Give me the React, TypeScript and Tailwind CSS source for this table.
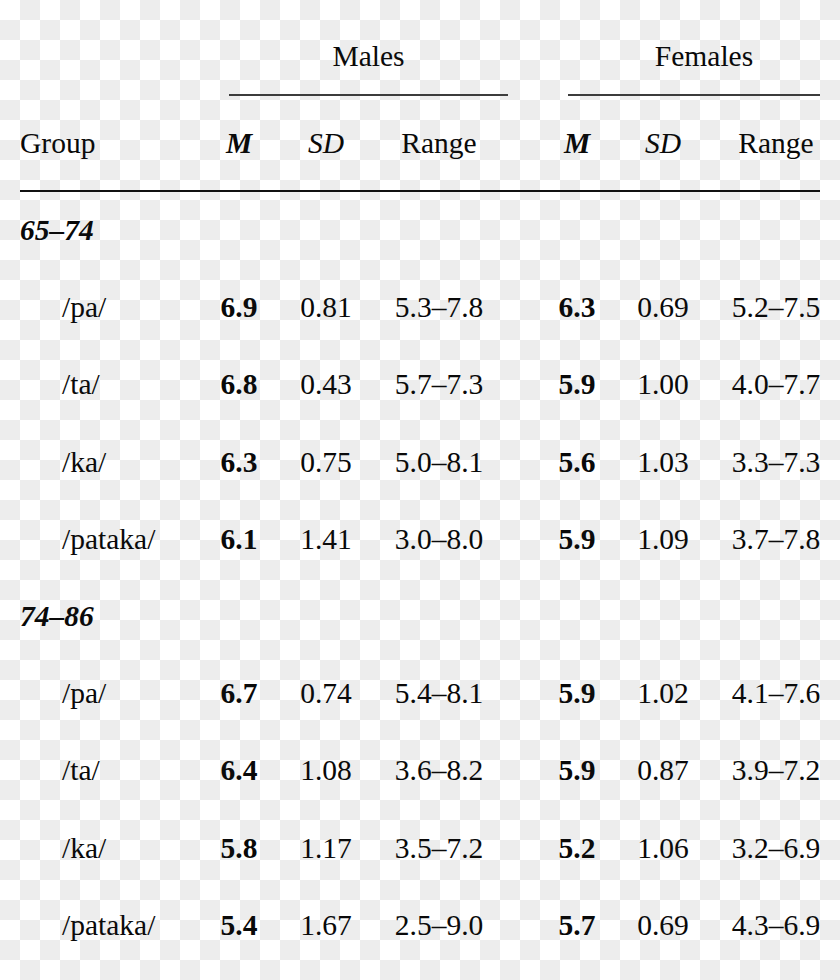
import React from "react";

type Row = [string, string, string, string, string, string, string];

const groups: { label: string; rows: Row[] }[] = [
  {
    label: "65–74",
    rows: [
      ["/pa/", "6.9", "0.81", "5.3–7.8", "6.3", "0.69", "5.2–7.5"],
      ["/ta/", "6.8", "0.43", "5.7–7.3", "5.9", "1.00", "4.0–7.7"],
      ["/ka/", "6.3", "0.75", "5.0–8.1", "5.6", "1.03", "3.3–7.3"],
      ["/pataka/", "6.1", "1.41", "3.0–8.0", "5.9", "1.09", "3.7–7.8"],
    ],
  },
  {
    label: "74–86",
    rows: [
      ["/pa/", "6.7", "0.74", "5.4–8.1", "5.9", "1.02", "4.1–7.6"],
      ["/ta/", "6.4", "1.08", "3.6–8.2", "5.9", "0.87", "3.9–7.2"],
      ["/ka/", "5.8", "1.17", "3.5–7.2", "5.2", "1.06", "3.2–6.9"],
      ["/pataka/", "5.4", "1.67", "2.5–9.0", "5.7", "0.69", "4.3–6.9"],
    ],
  },
];

const grid =
  "grid grid-cols-[200px_78px_96px_130px_36px_74px_98px_128px] items-center";

export default function App() {
  return (
    <div className="w-[840px] h-[980px] overflow-hidden bg-[image:repeating-conic-gradient(#ededed_0_25%,#ffffff_0_50%)] bg-[length:40px_40px] text-[#0a0a0a] text-[29.5px] font-['Liberation_Serif','Times_New_Roman',serif]">
      <div className="pt-[36px]">
        <div className="flex h-[41px] leading-[41px]">
          <div className="ml-[229px] w-[279px] text-center">Males</div>
          <div className="ml-[60px] w-[252px] pl-[20px] text-center">Females</div>
        </div>
        <div className="h-[17px]" />
        <div className="flex h-[2px]">
          <div className="ml-[229px] w-[279px] bg-[#3c3c3c]" />
          <div className="ml-[60px] w-[252px] bg-[#3c3c3c]" />
        </div>
        <div className={`${grid} h-[93.5px] leading-[34px]`}>
          <div className="pl-[20px]">Group</div>
          <div className="text-center italic font-bold">M</div>
          <div className="text-center italic">SD</div>
          <div className="text-center">Range</div>
          <div />
          <div className="text-center italic font-bold">M</div>
          <div className="text-center italic">SD</div>
          <div className="text-center">Range</div>
        </div>
        <div className="ml-[20px] w-[800px] h-[2px] bg-[#111111]" />
        {groups.map((g) => (
          <div key={g.label}>
            <div className={`${grid} h-[77.2px] leading-[34px]`}>
              <div className="pl-[20px] italic font-bold">{g.label}</div>
            </div>
            {g.rows.map((r, i) => (
              <div key={i} className={`${grid} h-[77.2px] leading-[34px]`}>
                <div className="pl-[62px]">{r[0]}</div>
                <div className="text-center font-bold">{r[1]}</div>
                <div className="text-center">{r[2]}</div>
                <div className="text-center">{r[3]}</div>
                <div />
                <div className="text-center font-bold">{r[4]}</div>
                <div className="text-center">{r[5]}</div>
                <div className="text-center">{r[6]}</div>
              </div>
            ))}
          </div>
        ))}
      </div>
    </div>
  );
}
